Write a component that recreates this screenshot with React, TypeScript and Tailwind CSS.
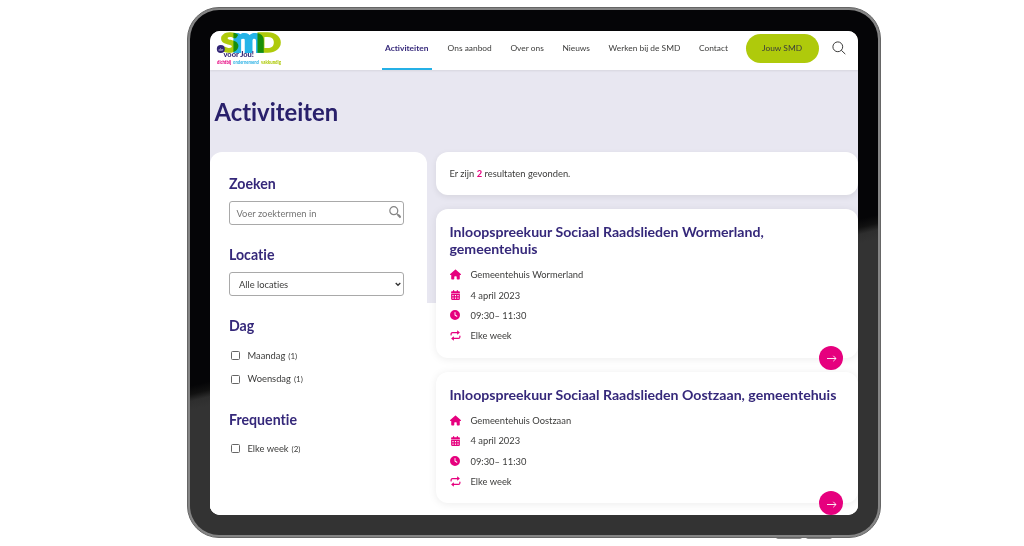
import type { ReactNode } from 'react'
import { FaHouse, FaCalendarDays, FaClock } from 'react-icons/fa6'

interface Activity {
  title: string
  place: string
  date: string
  time: string
  frequency: string
}

const NAV_ITEMS = ['Ons aanbod', 'Over ons', 'Nieuws', 'Werken bij de SMD', 'Contact']

const ACTIVITIES: Activity[] = [
  {
    title: 'Inloopspreekuur Sociaal Raadslieden Wormerland, gemeentehuis',
    place: 'Gemeentehuis Wormerland',
    date: '4 april 2023',
    time: '09:30– 11:30',
    frequency: 'Elke week',
  },
  {
    title: 'Inloopspreekuur Sociaal Raadslieden Oostzaan, gemeentehuis',
    place: 'Gemeentehuis Oostzaan',
    date: '4 april 2023',
    time: '09:30– 11:30',
    frequency: 'Elke week',
  },
]

function Logo() {
  return (
    <svg width="76" height="38" viewBox="0 0 76 38" className="shrink-0 overflow-visible font-[Lato,sans-serif]">
      <g fontWeight="900" fontSize="26" strokeWidth="1.5">
        <text x="10.5" y="20.8" textLength="18" lengthAdjust="spacingAndGlyphs" fill="#afca0b" stroke="#afca0b">S</text>
        <text x="46" y="20.8" textLength="25" lengthAdjust="spacingAndGlyphs" fill="#afca0b" stroke="#afca0b">D</text>
        <text x="22.5" y="20.8" fontSize="34" strokeWidth="2.2" textLength="32" lengthAdjust="spacingAndGlyphs" fill="#25b4e8" stroke="#25b4e8" className="mix-blend-multiply">m</text>
      </g>
      <circle cx="10.8" cy="18" r="4" fill="#312474" />
      <text x="8.4" y="19.6" fontSize="4.4" fontWeight="700" fill="#b9b5d4">de</text>
      <text x="13.5" y="26.4" fontSize="6.8" fontWeight="900" textLength="30.5" lengthAdjust="spacingAndGlyphs" fill="#312474">voor Jou!</text>
      <g fontSize="4.6" fontWeight="900">
        <text x="7" y="33.4" textLength="14" lengthAdjust="spacingAndGlyphs" fill="#e6007e">dichtbij</text>
        <text x="23" y="33.4" textLength="26" lengthAdjust="spacingAndGlyphs" fill="#36b5e6">ondernemend</text>
        <text x="51" y="33.4" textLength="20" lengthAdjust="spacingAndGlyphs" fill="#afca0b">vakkundig</text>
      </g>
    </svg>
  )
}

function RepeatIcon() {
  return (
    <svg viewBox="0 0 12 12" className="w-[11px] h-[11px]" fill="none" stroke="currentColor" strokeWidth="1.3">
      <path d="M1.2 5.4V4.4c0-1 .6-1.6 1.6-1.6h6M10.8 6.6v1c0 1-.6 1.6-1.6 1.6h-6" strokeLinecap="round" />
      <path d="M7.8.4 10.8 2.8 7.8 5.2zM4.2 6.8 1.2 9.2 4.2 11.6z" fill="currentColor" stroke="none" />
    </svg>
  )
}

function DetailRow({ icon, children }: { icon: ReactNode; children: ReactNode }) {
  return (
    <li className="flex h-[20.4px] items-center">
      <span className="-mt-px flex w-[21px] text-[#e6007e]">{icon}</span>
      <span>{children}</span>
    </li>
  )
}

function ActivityCard({ activity }: { activity: Activity }) {
  return (
    <article className="relative rounded-[12px] bg-white px-[14px] pt-[14px] pb-[11px] shadow-[0_1px_8px_rgba(0,0,0,0.08)]">
      <h2 className="mb-[8px] text-[14.12px] leading-[17px] font-bold text-[#35287a]">{activity.title}</h2>
      <ul>
        <DetailRow icon={<FaHouse className="w-[11px] h-[11px]" />}>{activity.place}</DetailRow>
        <DetailRow icon={<FaCalendarDays className="ml-px w-[9px] h-[10px]" />}>{activity.date}</DetailRow>
        <DetailRow icon={<FaClock className="w-[10px] h-[10px]" />}>{activity.time}</DetailRow>
        <DetailRow icon={<RepeatIcon />}>{activity.frequency}</DetailRow>
      </ul>
      <button className="absolute right-[15px] -bottom-[12px] flex h-[24px] w-[24px] items-center justify-center rounded-full bg-[#e6007e] text-white">
        <svg viewBox="0 0 12 10" className="mt-[2px] h-[9px] w-[11px]" fill="none" stroke="currentColor" strokeWidth="1">
          <path d="M1 5h10M8 2l3 3-3 3" />
        </svg>
      </button>
    </article>
  )
}

function FilterTitle({ children }: { children: ReactNode }) {
  return <h2 className="pt-px text-[14.17px] leading-[17px] font-bold text-[#35287a]">{children}</h2>
}

function FilterOption({ label, count }: { label: string; count: number }) {
  return (
    <label className="flex h-[23.5px] items-center pl-[2px]">
      <span className="mr-[7.5px] h-[9px] w-[9px] rounded-[1.5px] border border-[#666]" />
      {label}
      <span className="ml-[3px] text-[8px]">({count})</span>
    </label>
  )
}

function Header() {
  return (
    <header className="relative flex h-[39px] shrink-0 bg-white text-[8.4px] text-[#3c3c3b] shadow-[0_1px_2px_rgba(0,0,0,0.08)]">
      <Logo />
      <nav className="ml-[96px] flex h-[39px] items-center gap-[18.6px] whitespace-nowrap">
        <a className="-mr-[2.5px] flex h-full items-center border-b-2 border-[#25b0e6] px-[3px] font-bold text-[#35287a]">
          <span className="-mt-[3px]">Activiteiten</span>
        </a>
        {NAV_ITEMS.map((item) => (
          <a key={item} className="-mt-[5px]">{item}</a>
        ))}
        <button className="mt-[-4px] -ml-px h-[29.5px] w-[73px] rounded-full bg-[#afca0b]">Jouw SMD</button>
      </nav>
      <svg viewBox="0 0 14 14" className="mt-[10px] ml-[13.5px] h-[14px] w-[14px]" fill="none" stroke="#3c3c3b" strokeWidth="1">
        <circle cx="5.8" cy="5.8" r="4.9" />
        <path d="m9.3 9.3 4 3.8" />
      </svg>
    </header>
  )
}

function Sidebar() {
  return (
    <aside className="h-[364px] w-[217px] shrink-0 rounded-t-[12px] bg-white pt-[22px] pr-[23px] pl-[19px]">
      <FilterTitle>Zoeken</FilterTitle>
      <div className="mt-[9px] flex h-[24px] items-center justify-between rounded-[3px] border border-[#a9a9a9] pt-[2px] pr-[2px] pl-[6.5px] text-[#757575]">
        Voer zoektermen in
        <svg viewBox="0 0 12 12" className="-mt-[3px] h-[12.5px] w-[12.5px]" fill="none" stroke="#858585" strokeWidth="1.2">
          <circle cx="4.6" cy="4.5" r="3.8" />
          <path d="m7.4 7.3 1.6 1.5" />
          <path d="m8.6 8.4 2.7 2.7" strokeWidth="2.2" />
        </svg>
      </div>
      <div className="mt-[20px]">
        <FilterTitle>Locatie</FilterTitle>
        <div className="mt-[9px] flex h-[24px] items-center justify-between rounded-[3px] border border-[#a9a9a9] pt-[2px] pr-[2px] pl-[9px]">
          Alle locaties
          <svg viewBox="0 0 6 5" className="-mt-[2px] h-[5px] w-[6px]" fill="none" stroke="#333" strokeWidth="1.3">
            <path d="m.7 1 2.3 2.3L5.3 1" />
          </svg>
        </div>
      </div>
      <div className="mt-[20px]">
        <FilterTitle>Dag</FilterTitle>
        <div className="mt-[10px]">
          <FilterOption label="Maandag" count={1} />
          <FilterOption label="Woensdag" count={1} />
        </div>
      </div>
      <div className="mt-[18.5px]">
        <FilterTitle>Frequentie</FilterTitle>
        <div className="mt-[9.5px]">
          <FilterOption label="Elke week" count={2} />
        </div>
      </div>
    </aside>
  )
}

export default function App() {
  return (
    <div className="relative h-[546px] w-[1024px] overflow-hidden bg-white pt-[7px] pl-[187px] font-[Lato,sans-serif] [font-variant-ligatures:none]">
      {/* Side buttons */}
      <div className="absolute top-[471px] left-[880px] h-[31px] w-px bg-[#333]" />
      <div className="absolute top-[537px] left-[776px] h-[2px] w-[26px] rounded-b bg-[#888]" />
      <div className="absolute top-[537px] left-[806px] h-[2px] w-[26px] rounded-b bg-[#888]" />

      {/* Tablet */}
      <div className="relative h-[531px] w-[694px] rounded-[32px] border border-[#666] bg-[#858585] p-[2px]">
        <div className="h-full rounded-[29px] bg-[linear-gradient(166deg,#050507_54%,#111_55.2%,#2e2e2e_56.2%,#333_57.5%)] pt-[21px] pl-[20px]">
          <div className="flex h-[484px] w-[648px] flex-col overflow-hidden rounded-[10px] bg-white">
            <Header />
            <div className="flex-1 bg-[linear-gradient(#e8e7f1_233px,#fff_233px)]">
              <h1 className="h-[82px] pt-[27px] pl-[4.5px] text-[23.8px] leading-[30px] font-bold text-[#29206b]">Activiteiten</h1>
              <div className="flex gap-[8.5px] text-[9.35px] text-[#3c3c3b]">
                <Sidebar />
                <main className="flex flex-1 flex-col gap-[14px]">
                  <div className="flex h-[43px] items-center rounded-[12px] bg-white px-[14px] pt-[2px] shadow-[0_2px_6px_rgba(0,0,0,0.08)]">
                    <p>
                      Er zijn <strong className="text-[#e6007e]">2</strong> resultaten gevonden.
                    </p>
                  </div>
                  {ACTIVITIES.map((activity) => (
                    <ActivityCard key={activity.title} activity={activity} />
                  ))}
                </main>
              </div>
            </div>
          </div>
        </div>
      </div>
    </div>
  )
}
